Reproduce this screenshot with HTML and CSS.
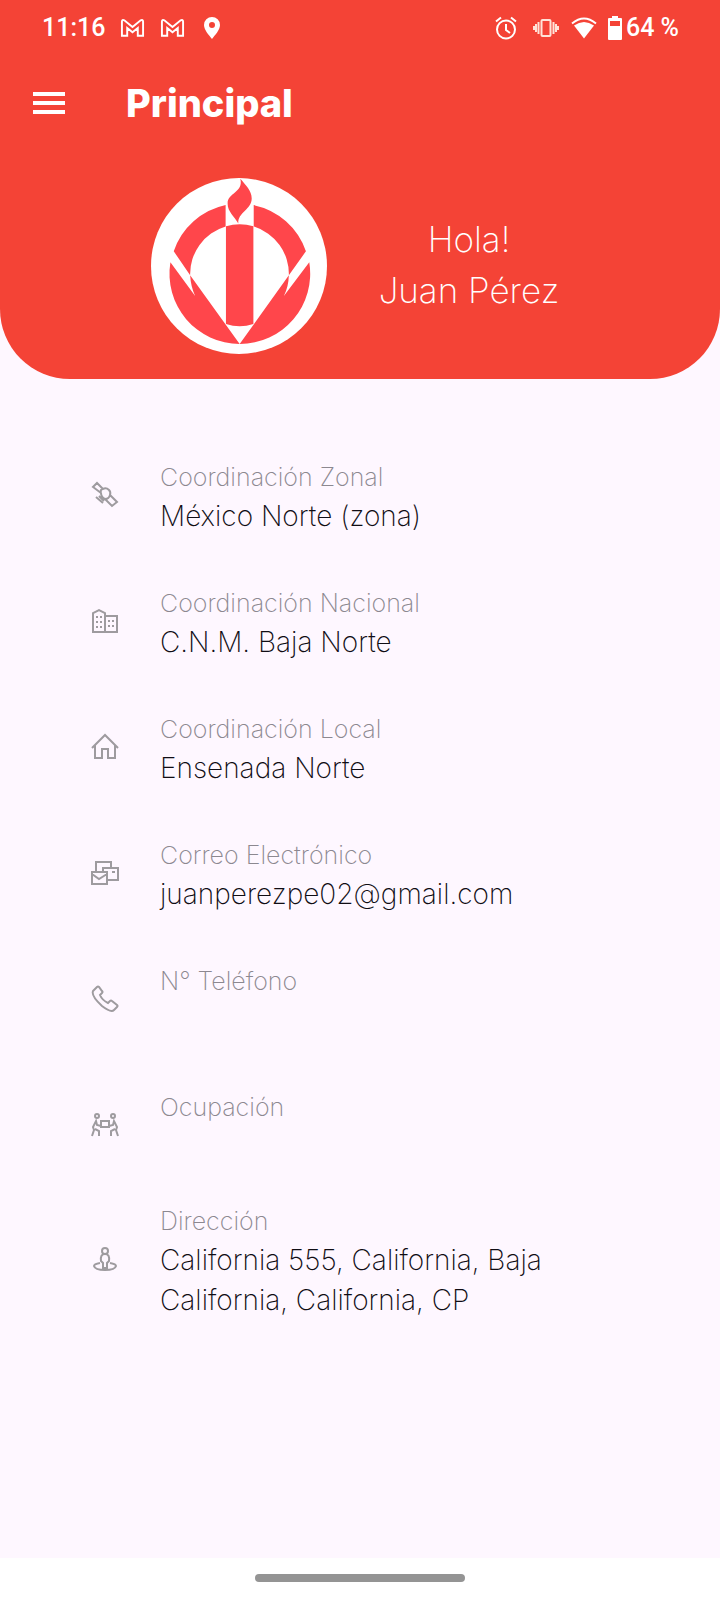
FILE: index.html
```html
<!DOCTYPE html>
<html lang="es">
<head>
<meta charset="utf-8">
<meta name="viewport" content="width=device-width, initial-scale=1">
<title>Principal</title>
<link rel="stylesheet" href="styles.css">
</head>
<body>
<header class="header">
  <div class="status">
    <div class="status-left">
      <span class="clock">11:16</span>
      <svg class="mail" viewBox="0 0 26 20" aria-hidden="true"><path d="M2 18V3.500Q2 1 4.500 2L13 9L21.500 2Q24 1 24 3.500V18H18.500V10L13 14.500L7.500 10V18Z"/></svg>
      <svg class="mail" viewBox="0 0 26 20" aria-hidden="true"><path d="M2 18V3.500Q2 1 4.500 2L13 9L21.500 2Q24 1 24 3.500V18H18.500V10L13 14.500L7.500 10V18Z"/></svg>
      <svg class="pin" viewBox="0 0 16 22" aria-hidden="true"><path fill-rule="evenodd" d="M8 0a8 8 0 0 1 8 8c0 5-5 10-8 14C5 18 0 13 0 8a8 8 0 0 1 8-8zm0 5a3 3 0 1 0 0 6a3 3 0 0 0 0-6z"/></svg>
    </div>
    <div class="status-right">
      <svg class="alarm" viewBox="0 0 22 24" aria-hidden="true"><circle cx="11" cy="13.500" r="9"/><path d="M11 8v6l4 3M1 5.500l5-4M21 5.500l-5-4"/></svg>
      <svg class="vibrate" viewBox="0 0 26 20" aria-hidden="true"><rect x="8.500" y="2" width="9" height="16" rx="1"/><path d="M5.500 4v12M3 6v8M1 8v4M20.500 4v12M23 6v8M25 8v4"/></svg>
      <svg class="wifi" viewBox="0 0 26 22" aria-hidden="true"><path d="M1 6.500Q13-3.500 25 6.500" class="wifi-arc"/><path d="M3 8.500Q13 1.500 23 8.500L13 21.500Z"/></svg>
      <svg class="battery" viewBox="0 0 14 24" aria-hidden="true"><path fill-rule="evenodd" d="M4 0h6v2h3q1 0 1 1v20q0 1-1 1H1q-1 0-1-1V3q0-1 1-1h3zM2 5v5h10V5z"/></svg>
      <span class="percent">64 %</span>
    </div>
  </div>
  <div class="appbar">
    <button class="menu" type="button" aria-label="Menú"><span></span><span></span><span></span></button>
    <h1 class="title">Principal</h1>
  </div>
  <div class="profile">
    <svg class="logo" viewBox="35 39 526 526" role="img" aria-label="Logotipo">
      <circle cx="298" cy="302" r="263" fill="#fff"/>
      <g fill="#ff464b">
        <path d="M258 120A210 210 0 0 0 103 258L152 330A148 148 0 0 1 258 184Z"/>
        <path d="M342 120A210 210 0 0 1 498 258L447 330A148 148 0 0 0 342 184Z"/>
        <path d="M93 291A210 210 0 0 0 300 535L152 330Q154 365 167 392Z"/>
        <path d="M508 291A210 210 0 0 1 300 535L447 330Q446 365 432 392Z"/>
        <path d="M259 183Q300 171 341 183V475Q300 489 259 475Z"/>
        <path d="M302 41C312 83 264 82 264 115C264 140 284 153 296 175C294 140 336 134 336 100C336 76 318 60 302 41Z"/>
      </g>
    </svg>
    <p class="greeting">Hola!<br>Juan Pérez</p>
  </div>
</header>
<main class="details">
  <section class="row">
    <svg class="icon" viewBox="0 0 28 28" aria-hidden="true"><path d="M10 12L2 6L6 2L12 8M19 14L26 21L21 25L14 18M10 12Q9 8 12 8Q15 6 18 9Q20 11 19 14Q18 18 14 18Q10 16 10 12M5 16L12 22M8 15L13 20"/></svg>
    <div class="text"><h2 class="label">Coordinación Zonal</h2><p class="value">México Norte (zona)</p></div>
  </section>
  <section class="row">
    <svg class="icon" viewBox="0 0 28 28" aria-hidden="true"><path d="M1 25H27M2 25V6L8 3L14 6V25M14 9H26V25"/><path class="dots" d="M6 9v14M10 9v14M18 13v10M22 13v10"/></svg>
    <div class="text"><h2 class="label">Coordinación Nacional</h2><p class="value">C.N.M. Baja Norte</p></div>
  </section>
  <section class="row">
    <svg class="icon" viewBox="0 0 28 28" aria-hidden="true"><path d="M1 15L14 2L27 15M4 12V25H11V16H17V25H24V12"/></svg>
    <div class="text"><h2 class="label">Coordinación Local</h2><p class="value">Ensenada Norte</p></div>
  </section>
  <section class="row">
    <svg class="icon" viewBox="0 0 28 28" aria-hidden="true"><path d="M1 13H16V25H1ZM1 15L8 20L16 15M5 13V3H20V9M12 13V9H27V21H16M21 13H24"/></svg>
    <div class="text"><h2 class="label">Correo Electrónico</h2><p class="value">juanperezpe02@gmail.com</p></div>
  </section>
  <section class="row">
    <svg class="icon" viewBox="0 0 28 28" aria-hidden="true"><path d="M2 6L6 2Q7 1 8 2L11 6Q12 7 11 8L9 10Q11 15 17 18L19 16Q20 15 21 16L26 20Q27 21 26 22L23 25Q20 28 11 21Q0 11 2 6Z"/></svg>
    <div class="text"><h2 class="label">N° Teléfono</h2><p class="value"></p></div>
  </section>
  <section class="row">
    <svg class="icon" viewBox="0 0 28 28" aria-hidden="true"><circle cx="6" cy="5" r="2"/><circle cx="22" cy="5" r="2"/><path d="M10 10H18V16H10ZM10 15L6 14L5 10L2 16L3 19L1 25M4 18L8 20V25M18 15L22 14L23 10L26 16L25 19L27 25M24 18L20 20V25"/></svg>
    <div class="text"><h2 class="label">Ocupación</h2><p class="value"></p></div>
  </section>
  <section class="row">
    <svg class="icon" viewBox="0 0 28 28" aria-hidden="true"><circle cx="14" cy="6" r="3"/><path d="M14 9Q9 9 10 16L12 18V23H16V18L18 16Q19 9 14 9M9 18Q3 19 3 21Q4 25 14 25Q24 25 25 21Q25 19 19 18"/></svg>
    <div class="text"><h2 class="label">Dirección</h2><p class="value">California 555, California, Baja California, California, CP</p></div>
  </section>
</main>
<footer class="navbar"><div class="handle"></div></footer>
</body>
</html>
```
FILE: styles.css
```css
* { box-sizing: border-box; }
body {
  margin: 0;
  min-height: 100vh;
  display: flex;
  flex-direction: column;
  background: #fef7ff;
  font-family: Inter, "Open Sans", sans-serif;
}
h1, h2, p { margin: 0; }
svg { display: block; flex: none; }
.header {
  background: #f44336;
  color: #fff;
  border-radius: 0 0 70px 70px;
  padding-bottom: 25px;
}
.status {
  display: flex;
  justify-content: space-between;
  height: 56px;
  padding: 0 41px 0 42px;
  font: 500 25px/56px Roboto, sans-serif;
  fill: #fff;
}
.status-left, .status-right { display: flex; align-items: center; }
.status-left { gap: 15px; }
.mail { width: 25px; height: 20px; fill: none; stroke: #fff; stroke-width: 2; }
.pin { width: 16px; height: 22px; margin-left: 4px; }
.alarm { width: 22px; height: 24px; fill: none; stroke: #fff; stroke-width: 2; margin-right: 16px; }
.vibrate { width: 26px; height: 20px; fill: none; stroke: #ffe3d8; stroke-width: 2; margin-right: 12px; }
.wifi { width: 26px; height: 22px; margin-right: 11px; }
.wifi-arc { fill: none; stroke: #fff; stroke-width: 2; }
.battery { width: 14px; height: 24px; margin-right: 4px; }
.appbar { display: flex; align-items: center; height: 94px; padding-left: 33px; gap: 61px; }
.menu {
  display: flex;
  flex-direction: column;
  gap: 5px;
  width: 32px;
  padding: 0;
  border: 0;
  background: none;
}
.menu span { height: 4px; width: 100%; background: #fff; }
.title { font-size: 38px; font-weight: 800; line-height: 48px; }
.profile {
  display: flex;
  align-items: center;
  justify-content: center;
  gap: 52px;
  padding: 28px 10px 0 0;
}
.logo { width: 176px; height: 176px; }
.greeting { padding-bottom: 2px; font-size: 35px; font-weight: 200; line-height: 51px; text-align: center; }
.details { flex: 1; padding: 53px 91px 0; }
.row {
  display: flex;
  align-items: center;
  gap: 41px;
  min-height: 126px;
  padding: 10px 0;
}
.icon { width: 28px; height: 28px; fill: none; stroke: #9e9b9f; stroke-width: 2; }
.dots { stroke-dasharray: 2 3; }
.text { flex: 1; min-width: 0; padding-top: 4px; }
.label { font-size: 25px; font-weight: 200; line-height: 38px; color: #8c8890; }
.value { min-height: 40px; font-size: 28px; font-weight: 200; line-height: 40px; color: #100d14; }
.navbar {
  display: flex;
  justify-content: center;
  height: 42px;
  padding-top: 16px;
  background: #fff;
}
.handle { width: 210px; height: 8px; border-radius: 4px; background: #949494; }
```
